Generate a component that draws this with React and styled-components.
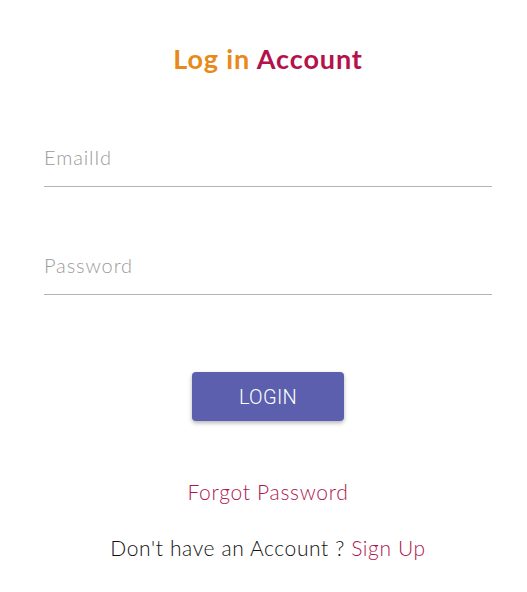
import React from 'react'
import styled, { createGlobalStyle } from 'styled-components'

const GlobalStyle = createGlobalStyle`
  html, body {
    margin: 0;
    padding: 0;
    background: #ffffff;
  }
  body {
    font-family: Lato, "Open Sans", sans-serif;
  }
`

function App() {
  return (
    <>
      <GlobalStyle />
      <Page>
        <Title>
          <Orange>Log in</Orange> <Crimson>Account</Crimson>
        </Title>
        <Form>
          <Field>
            <Input type="email" placeholder="EmailId" />
          </Field>
          <Field>
            <Input type="password" placeholder="Password" />
          </Field>
        </Form>
        <LoginButton>LOGIN</LoginButton>
        <Forgot>Forgot Password</Forgot>
        <SignupLine>
          Don't have an Account ? <LinkText>Sign Up</LinkText>
        </SignupLine>
      </Page>
    </>
  )
}

export default App

const Page = styled.div`
  width: 527px;
  height: 592px;
  box-sizing: border-box;
  padding: 42px 35px 0 44px;
  display: flex;
  flex-direction: column;
  align-items: center;
`
const Title = styled.h1`
  margin: 0;
  font-family: Lato, sans-serif;
  font-size: 27px;
  font-weight: 700;
  letter-spacing: 0.9px;
  line-height: 34px;
`
const Orange = styled.span`
  color: #e88a1a;
`
const Crimson = styled.span`
  color: #b3124c;
`
const Form = styled.div`
  width: 100%;
  margin-top: 57px;
  display: flex;
  flex-direction: column;
  gap: 55px;
`
const Field = styled.div`
  box-sizing: border-box;
  border-bottom: 1.5px solid #b4b4b4;
  height: 53.5px;
  padding-bottom: 5px;
  display: flex;
  align-items: center;
`
const Input = styled.input`
  width: 100%;
  border: none;
  outline: none;
  background: transparent;
  padding: 0;
  font-family: Lato, sans-serif;
  font-weight: 300;
  font-size: 20px;
  letter-spacing: 0.9px;
  color: #333;
  &::placeholder {
    color: #9a9a9a;
  }
`
const LoginButton = styled.button`
  margin-top: 77px;
  width: 152px;
  height: 49px;
  border: none;
  border-radius: 4px;
  background: #5b5fad;
  color: #ffffff;
  font-family: Roboto, sans-serif;
  font-weight: 300;
  font-size: 20px;
  letter-spacing: 0.3px;
  box-shadow: 0 2px 4px rgba(0, 0, 0, 0.3);
  cursor: pointer;
`
const Forgot = styled.a`
  margin-top: 58px;
  font-family: Lato, sans-serif;
  font-weight: 300;
  font-size: 21px;
  letter-spacing: 0.7px;
  color: #ad1850;
  cursor: pointer;
`
const SignupLine = styled.p`
  margin: 31px 0 0;
  font-family: Lato, sans-serif;
  font-weight: 300;
  font-size: 21px;
  letter-spacing: 0.6px;
  color: #111111;
`
const LinkText = styled.a`
  color: #ad1850;
  cursor: pointer;
`
